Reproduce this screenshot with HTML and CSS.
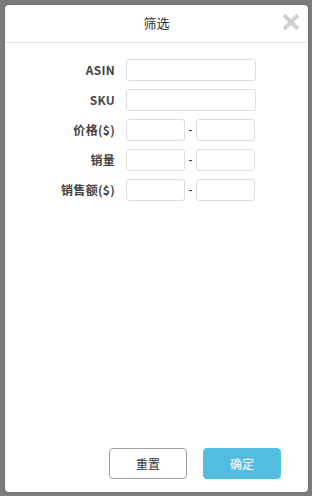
FILE: index.html
```html
<!DOCTYPE html>
<html lang="zh">
<head>
<meta charset="utf-8">
<link rel="stylesheet" href="styles.css">
</head>
<body>
<div class="dialog">
  <div class="header">
    <span class="title">筛选</span>
    <svg class="close" width="16" height="16" viewBox="0 0 16 16"><path d="M2.5 2.5 L13.5 13.5 M13.5 2.5 L2.5 13.5" stroke="#d0d0d0" stroke-width="4" stroke-linecap="square" fill="none"/></svg>
  </div>
  <div class="form">
    <label class="lbl">ASIN</label>
    <div class="field"><input class="inp wide" type="text"></div>
    <label class="lbl">SKU</label>
    <div class="field"><input class="inp wide" type="text"></div>
    <label class="lbl">价格($)</label>
    <div class="field"><input class="inp half" type="text"><span class="dash">-</span><input class="inp half" type="text"></div>
    <label class="lbl">销量</label>
    <div class="field"><input class="inp half" type="text"><span class="dash">-</span><input class="inp half" type="text"></div>
    <label class="lbl">销售额($)</label>
    <div class="field"><input class="inp half" type="text"><span class="dash">-</span><input class="inp half" type="text"></div>
  </div>
  <div class="footer">
    <button class="btn reset">重置</button>
    <button class="btn ok">确定</button>
  </div>
</div>
</body>
</html>
```
FILE: styles.css
```css
* { box-sizing: border-box; }
html, body { margin: 0; padding: 0; }
body {
  width: 312px;
  height: 496px;
  background: #7c7c7c;
  padding: 5px 4px 4px 5px;
  font-family: "Noto Sans CJK SC", "Liberation Sans", sans-serif;
  overflow: hidden;
}
.dialog {
  width: 303px;
  height: 487px;
  background: #fff;
  border-radius: 4px;
  display: flex;
  flex-direction: column;
  box-shadow: 0 0 2px rgba(0,0,0,0.3);
}
.header {
  position: relative;
  height: 38px;
  border-bottom: 1px solid #e3e3e3;
  display: flex;
  align-items: center;
  justify-content: center;
}
.title {
  font-size: 13px;
  color: #333;
  line-height: 1;
  margin-top: -3px;
}
.close {
  position: absolute;
  right: 9px;
  top: 9px;
  display: block;
}
.form {
  display: grid;
  grid-template-columns: 110px 1fr;
  column-gap: 11px;
  row-gap: 8px;
  padding-top: 16px;
  align-items: center;
}
.lbl {
  text-align: right;
  font-size: 12px;
  font-weight: bold;
  color: #444;
  line-height: 22px;
  letter-spacing: 0.3px;
}
.field {
  display: flex;
  align-items: center;
  height: 22px;
}
.inp {
  height: 22px;
  border: 1px solid #dcdce3;
  border-radius: 3px;
  background: #fff;
  padding: 0 4px;
  margin: 0;
  outline: none;
}
.wide { width: 130px; }
.half { width: 59px; }
.dash {
  width: 11px;
  text-align: center;
  font-size: 12px;
  color: #333;
  font-family: "Liberation Sans", sans-serif;
}
.footer {
  margin-top: auto;
  display: flex;
  justify-content: flex-end;
  gap: 16px;
  padding: 0 27px 13px 0;
}
.btn {
  width: 78px;
  height: 31px;
  border-radius: 4px;
  font-size: 12px;
  font-family: "Noto Sans CJK SC", sans-serif;
  margin: 0;
  padding: 0;
}
.reset {
  background: #fff;
  border: 1px solid #9e9e9e;
  color: #333;
}
.ok {
  background: #52bde0;
  border: 1px solid #52bde0;
  color: #fff;
}
```
